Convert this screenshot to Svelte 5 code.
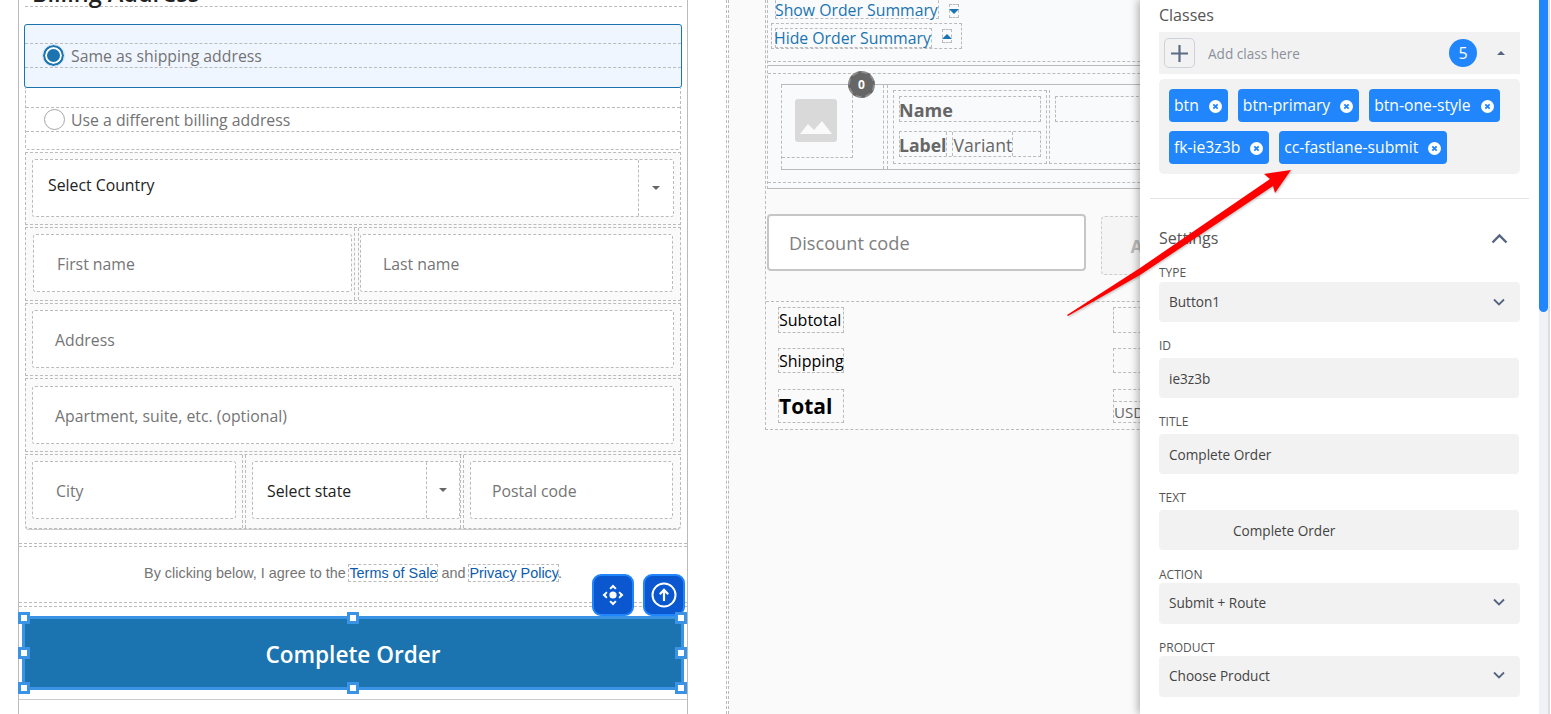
<script>
  const tags = ['btn', 'btn-primary', 'btn-one-style', 'fk-ie3z3b', 'cc-fastlane-submit'];
  const fields = [
    { label: 'TYPE', value: 'Button1', select: true, cls: 'f-type' },
    { label: 'ID', value: 'ie3z3b', cls: 'f-text' },
    { label: 'TITLE', value: 'Complete Order', cls: 'f-text' },
    { label: 'TEXT', value: 'Complete Order', cls: 'f-text f-indent' },
    { label: 'ACTION', value: 'Submit + Route', select: true, cls: 'f-tall' },
    { label: 'PRODUCT', value: 'Choose Product', select: true, cls: 'f-tall f-last' }
  ];
  const handles = ['tl', 'tc', 'tr', 'ml', 'mr', 'bl', 'bc', 'br'];
</script>

<div class="page">
  <section class="left">
    <div class="canvas">
      <h2 class="billing">Billing Address</h2>

      <div class="opt opt-on">
        <div class="opt-line">
          <span class="radio radio-on"></span>
          <span>Same as shipping address</span>
        </div>
      </div>
      <div class="opt opt-off">
        <div class="opt-line">
          <span class="radio"></span>
          <span>Use a different billing address</span>
        </div>
      </div>

      <div class="fieldset">
        <div class="fs-row r1">
          <div class="box select">
            <span class="val val-country">Select Country</span>
            <span class="drop"><i class="caret"></i></span>
          </div>
        </div>
        <div class="fs-row r2 cells">
          <div class="cell c-first"><div class="box ph ph-23">First name</div></div>
          <div class="cell c-last"><div class="box ph">Last name</div></div>
        </div>
        <div class="fs-row r3"><div class="box ph">Address</div></div>
        <div class="fs-row r4"><div class="box ph">Apartment, suite, etc. (optional)</div></div>
        <div class="fs-row r5 cells">
          <div class="cell c-city"><div class="box ph ph-23">City</div></div>
          <div class="cell c-state">
            <div class="box select">
              <span class="val val-state">Select state</span>
              <span class="drop drop-sm"><i class="caret"></i></span>
            </div>
          </div>
          <div class="cell c-zip"><div class="box ph ph-21">Postal code</div></div>
        </div>
      </div>

      <div class="terms-wrap">
        <p class="terms">By clicking below, I agree to the <a href="#terms">Terms of Sale</a> and <a href="#privacy">Privacy Policy</a>.</p>
        <div class="tools">
          <span class="tool">
            <svg width="26" height="26" viewBox="0 0 26 26" fill="#fff">
              <circle cx="13" cy="13" r="3.6" />
              <path d="M13 2.5l3.6 3.8-1.4 1.2-2.2-1.9-2.2 1.9-1.4-1.2z" />
              <path d="M13 23.5l3.6-3.8-1.4-1.2-2.2 1.9-2.2-1.9-1.4 1.2z" />
              <path d="M2.5 13l3.8-3.6 1.2 1.4-1.9 2.2 1.9 2.2-1.2 1.4z" />
              <path d="M23.5 13l-3.8-3.6-1.2 1.4 1.9 2.2-1.9 2.2 1.2 1.4z" />
            </svg>
          </span>
          <span class="tool">
            <svg width="28" height="28" viewBox="0 0 28 28" fill="none" stroke="#fff">
              <circle cx="14" cy="14" r="11.5" stroke-width="2" />
              <path d="M14 20v-11M9.8 13.2L14 8.8l4.2 4.4" stroke-width="2.2" />
            </svg>
          </span>
        </div>
      </div>

      <div class="cta-wrap">
        <button class="cta" type="button">
          Complete Order
          {#each handles as h}
            <i class="handle {h}"></i>
          {/each}
        </button>
      </div>
    </div>
  </section>

  <section class="mid">
    <div class="mid-inner">
      <div class="col">
        <div class="sec-top">
          <div class="toggle t-show">
            <span class="dash link">Show Order Summary</span>
            <span class="dash tri-box"><i class="tri down"></i></span>
          </div>
          <div class="toggle t-hide">
            <span class="dash link">Hide Order Summary</span>
            <span class="dash tri-box"><i class="tri up"></i></span>
          </div>
          <div class="rule-d"></div>
          <div class="rule-s"></div>
          <div class="item-wrap">
            <div class="item">
              <div class="thumb-col">
                <div class="thumb">
                  <svg width="42" height="43" viewBox="0 0 42 43">
                    <rect width="42" height="43" rx="3" fill="#d9d9d9" />
                    <path d="M5 35l8-10 6 6 8-9 10 13z" fill="#fafafa" />
                  </svg>
                </div>
                <span class="badge">0</span>
              </div>
              <div class="info">
                <div class="info-main">
                  <div class="dash name">Name</div>
                  <div class="dash label-row">
                    <span class="dash lab">Label</span>
                    <span class="dash var">Variant</span>
                  </div>
                </div>
                <div class="info-side"><div class="dash side-box"></div></div>
              </div>
            </div>
          </div>
        </div>

        <div class="discount">
          <div class="code">Discount code</div>
          <div class="apply">Apply</div>
        </div>

        <div class="totals">
          <div class="t-left">
            <div class="dash t t1">Subtotal</div>
            <div class="dash t t2">Shipping</div>
            <div class="dash t t3">Total</div>
          </div>
          <div class="t-right">
            <div class="dash r r1b"></div>
            <div class="dash r r2b"></div>
            <div class="dash r r3b"><span class="usd">USD</span></div>
          </div>
        </div>
      </div>
    </div>
  </section>

  <aside class="panel">
    <div class="panel-body">
      <div class="classes-title">Classes</div>
      <div class="add-row">
        <span class="plus">
          <svg width="21" height="21" viewBox="0 0 21 21" stroke="#5c6b85" stroke-width="2.2">
            <path d="M10.5 2v17M2 10.5h17" />
          </svg>
        </span>
        <span class="add-ph">Add class here</span>
        <span class="count">5</span>
        <i class="mini-caret"></i>
      </div>
      <div class="tags">
        {#each tags as tag}
          <span class="tag">
            <span class="tag-name">{tag}</span>
            <svg class="x" width="13" height="13" viewBox="0 0 13 13">
              <circle cx="6.5" cy="6.5" r="6.5" fill="#fff" />
              <path d="M4.3 4.3l4.4 4.4M8.7 4.3l-4.4 4.4" stroke="#2185fc" stroke-width="1.8" />
            </svg>
          </span>
        {/each}
      </div>
      <div class="divider"></div>
      <div class="settings">
        <span>Settings</span>
        <svg width="17" height="11" viewBox="0 0 17 11" fill="none" stroke="#56657f" stroke-width="2.4">
          <path d="M1.5 9.5l7-7 7 7" />
        </svg>
      </div>
      {#each fields as f}
        <div class="field {f.cls}">
          <div class="f-label">{f.label}</div>
          <div class="f-box">
            <span>{f.value}</span>
            {#if f.select}
              <svg width="12" height="8" viewBox="0 0 12 8" fill="none" stroke="#56657f" stroke-width="1.8">
                <path d="M1 1.5l5 5 5-5" />
              </svg>
            {/if}
          </div>
        </div>
      {/each}
    </div>
    <div class="scroll"><div class="thumb-bar"></div></div>
  </aside>

  <svg class="arrow" width="1551" height="714" viewBox="0 0 1551 714">
    <polygon points="1067,315 1140,268 1270,179 1264,174 1291,170 1275,193 1273,186 1170,255 1140,275 1068,316" fill="#ff0000" />
  </svg>
</div>

<style>
  :global(body) {
    margin: 0;
    background: #fff;
    font-family: "Open Sans", "Noto Sans", sans-serif;
  }

  .page {
    position: relative;
    display: flex;
    width: 1551px;
    height: 714px;
    overflow: hidden;
  }

  .dash {
    border: 1px dashed #bbb;
    box-sizing: border-box;
  }

  /* left column: checkout form */
  .left {
    width: 726px;
    flex: none;
    padding-left: 18px;
    box-sizing: border-box;
  }

  .canvas {
    display: flow-root;
    width: 670px;
    height: 714px;
    border-left: 1px solid #bbb;
    border-right: 1px solid #bbb;
    box-sizing: border-box;
  }

  .billing {
    height: 30px;
    margin: -24px 5px 0 6px;
    padding-left: 7px;
    border-bottom: 1px dashed #bbb;
    font-size: 23.5px;
    line-height: 34px;
    font-weight: 600;
    color: #222;
    box-sizing: content-box;
  }

  .opt {
    box-sizing: border-box;
    color: #737373;
    font-size: 15.8px;
  }

  .opt-on {
    height: 64px;
    margin: 17px 5px 0 5px;
    padding-top: 19px;
    background: #f0f6ff;
    border: 1px solid #1b74b0;
    border-radius: 3px;
  }

  .opt-off {
    height: 62px;
    margin: 0 6px;
    padding-top: 19px;
    border: 1px dashed #bbb;
    border-top: 0;
    border-radius: 0 0 3px 3px;
  }

  .opt-line {
    display: flex;
    align-items: center;
    gap: 6px;
    height: 23px;
    padding-left: 18px;
    border-top: 1px dashed #bbb;
    border-bottom: 1px dashed #bbb;
    box-sizing: content-box;
  }

  .opt-on .opt-line {
    margin-top: -1px;
    gap: 7px;
  }

  .radio {
    width: 21px;
    height: 21px;
    flex: none;
    border-radius: 50%;
    border: 1.5px solid #a6a6a6;
    background: #fff;
    box-sizing: border-box;
  }

  .radio-on {
    border: 2px solid #1b74b0;
    box-shadow: inset 0 0 0 2px #fff;
    background: #1b74b0;
    outline: 1px solid #cfe2f3;
  }

  .fieldset {
    margin: 2px 6px 0;
    background: #fafafa;
    border-radius: 0 0 4px 4px;
    box-sizing: border-box;
  }

  .fs-row {
    margin-top: 2px;
    padding: 6px 6px 7px;
    border: 1px dashed #bbb;
    box-sizing: border-box;
  }

  .r1 {
    margin-top: 0;
  }

  .r2 {
    height: 74px;
  }

  .r3 {
    height: 73px;
  }

  .r4 {
    height: 74px;
    padding-top: 7px;
  }

  .r5 {
    height: 75px;
    border-radius: 0 0 4px 4px;
    box-shadow: 0 1px 0 #ccc;
  }

  .cells {
    display: flex;
    padding: 0;
  }

  .cell {
    padding-top: 6px;
    box-sizing: border-box;
  }

  .c-first {
    width: 329px;
    padding-left: 7px;
    padding-right: 2px;
    border-right: 1px dashed #bbb;
  }

  .c-last {
    flex: 1;
    margin-left: 3px;
    padding-left: 1px;
    padding-right: 7px;
    border-left: 1px dashed #bbb;
  }

  .c-city {
    width: 217px;
    padding-left: 6px;
    padding-right: 6px;
    border-right: 1px dashed #bbb;
  }

  .c-state {
    width: 216px;
    margin-left: 2px;
    padding-left: 6px;
    border-left: 1px dashed #bbb;
    border-right: 1px dashed #bbb;
  }

  .c-zip {
    flex: 1;
    margin-left: 2px;
    padding-left: 6px;
    padding-right: 7px;
    border-left: 1px dashed #bbb;
  }

  .box {
    height: 58px;
    display: flex;
    align-items: center;
    background: #fff;
    border: 1px dashed #bbb;
    border-radius: 3px;
    box-sizing: border-box;
    font-size: 15.8px;
  }

  .ph {
    padding: 2px 0 0 22px;
    color: #757575;
  }

  .ph-23 {
    padding-left: 23px;
  }

  .ph-21 {
    padding-left: 21px;
  }

  .select {
    justify-content: space-between;
    color: #222;
  }

  .val {
    padding-left: 15px;
  }

  .val-country {
    padding-bottom: 6px;
  }

  .val-state {
    padding: 2px 0 0 14px;
  }

  .drop {
    align-self: stretch;
    width: 34px;
    display: flex;
    align-items: center;
    justify-content: center;
    border-left: 1px dashed #bbb;
  }

  .drop-sm {
    width: 32px;
  }

  .caret {
    width: 0;
    height: 0;
    border: 4px solid transparent;
    border-top: 4px solid #666;
    border-bottom: 0;
  }

  .terms-wrap {
    position: relative;
    height: 60px;
    margin-top: 14px;
    padding-top: 2px;
    border-top: 1px dashed #bbb;
    border-bottom: 1px dashed #bbb;
    box-sizing: border-box;
  }

  .terms {
    margin: 0;
    padding-top: 17px;
    border-top: 1px dashed #bbb;
    text-align: center;
    font: 14.4px/18px "Liberation Sans", Arial, sans-serif;
    color: #757575;
  }

  .terms a {
    color: #0b5cad;
    text-decoration: none;
    outline: 1px dashed #bbb;
  }

  .tools {
    position: absolute;
    top: 30px;
    right: 2px;
    display: flex;
    gap: 9px;
  }

  .tool {
    width: 42px;
    height: 42px;
    display: flex;
    align-items: center;
    justify-content: center;
    background: #0b57d0;
    border: 2px solid #2185fc;
    border-radius: 9px;
    box-sizing: border-box;
  }

  .cta-wrap {
    height: 94px;
    margin-top: 3px;
    padding-top: 9px;
    border-top: 1px dashed #bbb;
    border-bottom: 1px solid #ccc;
    box-sizing: border-box;
  }

  .cta {
    position: relative;
    display: block;
    width: 662px;
    height: 74px;
    margin: 0 0 0 3px;
    padding-top: 3px;
    background: #1b74b0;
    border: 3px solid #3a93e4;
    color: #fff;
    font: 600 22.6px "Open Sans", sans-serif;
  }

  .handle {
    position: absolute;
    width: 12px;
    height: 12px;
    background: #fff;
    border: 3px solid #3a93e4;
    box-sizing: border-box;
  }

  .tl { left: -7px; top: -7px; }
  .tc { left: 322px; top: -7px; }
  .tr { right: -6px; top: -7px; }
  .ml { left: -7px; top: 28px; }
  .mr { right: -6px; top: 28px; }
  .bl { left: -7px; bottom: -7px; }
  .bc { left: 322px; bottom: -7px; }
  .br { right: -6px; bottom: -7px; }

  /* middle column: order summary */
  .mid {
    flex: 1;
    min-width: 0;
    overflow: hidden;
    border-left: 1px dashed #bbb;
  }

  .mid-inner {
    height: 100%;
    margin-left: 1px;
    padding-left: 36px;
    background: #fafafa;
    border-left: 1px dashed #bbb;
  }

  .col {
    width: 480px;
    height: 430px;
    border-left: 1px dashed #bbb;
    border-bottom: 1px dashed #bbb;
    box-sizing: border-box;
  }

  .sec-top {
    display: flow-root;
    height: 189px;
    margin-left: 1px;
    border-left: 1px dashed #bbb;
    border-bottom: 1px solid #bbb;
    box-sizing: border-box;
    background: #f9fafc;
  }

  .toggle {
    display: flex;
    align-items: center;
    color: #1b74b0;
    font-size: 15.8px;
  }

  .link {
    line-height: 18px;
    text-indent: -1px;
    white-space: nowrap;
  }

  .t-show {
    margin: -5px 0 0 7px;
    gap: 10px;
    height: 24px;
  }

  .t-show .link {
    height: 24px;
    padding-top: 5px;
  }

  .t-show .tri-box {
    margin-top: 8px;
  }

  .t-hide {
    width: 191px;
    height: 26px;
    margin: 4px 0 0 3px;
    padding: 3px 0 0 3px;
    gap: 10px;
    border: 1px dashed #bbb;
    box-sizing: border-box;
  }

  .t-hide .link {
    text-indent: -2px;
  }

  .t-hide .tri-box {
    margin-top: -3px;
  }

  .tri-box {
    width: 10px;
    height: 14px;
    display: flex;
    align-items: center;
    justify-content: center;
  }

  .tri {
    width: 0;
    height: 0;
    border: 5px solid transparent;
  }

  .tri.down {
    border-top: 5px solid #1b74b0;
    border-bottom: 0;
  }

  .tri.up {
    border-bottom: 5px solid #1b74b0;
    border-top: 0;
  }

  .rule-d {
    height: 13px;
    border-bottom: 1px dashed #bbb;
    box-sizing: border-box;
  }

  .rule-s {
    height: 3px;
    border-bottom: 1px solid #bbb;
    box-sizing: content-box;
  }

  .item-wrap {
    height: 110px;
    margin-top: 7px;
    padding: 10px 0 0 13px;
    border-top: 1px dashed #bbb;
    border-bottom: 1px dashed #bbb;
    box-sizing: border-box;
  }

  .item {
    display: flex;
    height: 86px;
    border-top: 1px solid #bbb;
    border-bottom: 1px solid #bbb;
    box-sizing: border-box;
  }

  .thumb-col {
    position: relative;
    width: 103px;
    flex: none;
    border: 1px dashed #bbb;
    border-top: 0;
    border-bottom: 0;
    box-sizing: border-box;
  }

  .thumb {
    width: 71px;
    height: 73px;
    padding: 0 2px 2px 0;
    display: flex;
    align-items: center;
    justify-content: center;
    border: 1px dashed #bbb;
    border-top: 0;
    border-left: 0;
    box-sizing: border-box;
  }

  .badge {
    position: absolute;
    top: -14px;
    left: 66px;
    width: 27px;
    height: 27px;
    display: flex;
    align-items: center;
    justify-content: center;
    border-radius: 50%;
    background: #666;
    border: 2px dashed #8c8c8c;
    box-sizing: border-box;
    color: #fff;
    font-size: 12px;
    font-weight: 700;
  }

  .info {
    display: flex;
    flex: 1;
    margin-left: 3px;
    padding-left: 5px;
    border-left: 1px dashed #bbb;
  }

  .info-main {
    width: 154px;
    height: 74px;
    margin-top: 5px;
    padding: 5px;
    border: 1px dashed #bbb;
    box-sizing: border-box;
    color: #666;
    font-size: 17.6px;
  }

  .name {
    height: 26px;
    font-size: 18px;
    font-weight: 700;
    line-height: 27px;
    text-indent: -1px;
  }

  .label-row {
    display: flex;
    height: 26px;
    margin-top: 9px;
    gap: 5px;
    line-height: 26px;
  }

  .label-row .lab {
    font-weight: 700;
    text-indent: -1px;
    border-top: 0;
    border-bottom: 0;
    border-left: 0;
  }

  .label-row .var {
    border-top: 0;
    border-bottom: 0;
  }

  .info-side {
    flex: 1;
    height: 74px;
    margin-top: 5px;
    margin-left: 2px;
    padding: 6px 0 0 5px;
    border-left: 1px dashed #bbb;
    border-bottom: 1px dashed #bbb;
    box-sizing: border-box;
  }

  .side-box {
    height: 26px;
  }

  .discount {
    display: flex;
    align-items: flex-start;
    height: 112px;
    padding-top: 25px;
    padding-left: 1px;
    gap: 15px;
    box-sizing: border-box;
  }

  .code {
    width: 319px;
    height: 57px;
    display: flex;
    align-items: center;
    padding-left: 20px;
    background: #fff;
    border: 2px solid #c6c6c6;
    border-radius: 4px;
    box-sizing: border-box;
    color: #808080;
    font-size: 18.2px;
  }

  .apply {
    width: 110px;
    height: 59px;
    margin-top: 2px;
    display: flex;
    align-items: center;
    justify-content: center;
    background: #f5f5f5;
    border: 1px dashed #ccc;
    border-radius: 4px;
    box-sizing: border-box;
    color: #bbb;
    font-size: 18px;
    font-weight: 700;
  }

  .totals {
    display: flex;
    height: 128px;
    padding: 5px 0 0 12px;
    border-top: 1px dashed #bbb;
    box-sizing: border-box;
  }

  .t-left {
    width: 66px;
    flex: none;
  }

  .t-right {
    width: 120px;
    margin-left: 269px;
    flex: none;
  }

  .t {
    color: #000;
    font-size: 16px;
    white-space: nowrap;
  }

  .t1 {
    height: 26px;
    line-height: 24px;
  }

  .t2 {
    height: 25px;
    margin-top: 15px;
    margin-bottom: 16px;
    line-height: 24px;
  }

  .t3 {
    height: 34px;
    font-size: 21px;
    font-weight: 700;
    line-height: 33px;
  }

  .r {
    border-right: 0;
  }

  .r1b {
    height: 26px;
  }

  .r2b {
    height: 25px;
    margin: 15px 0 16px;
  }

  .r3b {
    height: 34px;
    padding-top: 11px;
    color: #666;
    font-size: 15px;
    line-height: 21px;
  }

  .usd {
    display: block;
    border-top: 1px dashed #bbb;
  }

  /* right panel */
  .panel {
    position: relative;
    width: 411px;
    flex: none;
    display: flex;
    background: #fff;
    box-shadow: -2px 0 8px rgba(0, 0, 0, 0.3);
  }

  .panel-body {
    width: 399px;
    padding: 0 10px 0 19px;
    box-sizing: border-box;
    flex: none;
  }

  .classes-title {
    height: 32px;
    padding-top: 4px;
    box-sizing: border-box;
    color: #555;
    font-size: 16px;
    line-height: 22px;
  }

  .add-row {
    display: flex;
    align-items: center;
    height: 42px;
    width: 361px;
    padding-left: 5px;
    background: #f2f2f2;
    box-sizing: border-box;
  }

  .plus {
    width: 31px;
    height: 30px;
    display: flex;
    align-items: center;
    justify-content: center;
    border: 1px solid #cdd1d9;
    border-radius: 5px;
    box-sizing: border-box;
  }

  .add-ph {
    margin-left: 13px;
    color: #8b909c;
    font-size: 13.6px;
  }

  .count {
    width: 28px;
    height: 28px;
    margin-left: auto;
    display: flex;
    align-items: center;
    justify-content: center;
    border-radius: 50%;
    background: #2185fc;
    color: #fff;
    font-size: 16px;
  }

  .mini-caret {
    width: 0;
    height: 0;
    margin: 0 15px 0 20px;
    border: 4px solid transparent;
    border-bottom: 4px solid #56657f;
    border-top: 0;
  }

  .tags {
    display: flex;
    flex-wrap: wrap;
    align-content: flex-start;
    gap: 9px 10px;
    width: 361px;
    height: 95px;
    margin-top: 5px;
    padding: 10px;
    background: #f2f2f2;
    border-radius: 5px;
    box-sizing: border-box;
  }

  .tag {
    height: 33px;
    display: flex;
    align-items: center;
    gap: 10px;
    padding: 0 6px 0 5px;
    background: #2185fc;
    border-radius: 4px;
    color: #fff;
    font-size: 15.7px;
    box-sizing: border-box;
  }

  .tag-name {
    margin-top: -2px;
  }

  .x {
    margin-top: 1px;
  }

  .divider {
    height: 1px;
    width: 379px;
    margin: 24px 0 0 -9px;
    background: #e3e3e3;
  }

  .settings {
    display: flex;
    justify-content: space-between;
    align-items: center;
    width: 349px;
    height: 22px;
    margin-top: 28px;
    color: #555;
    font-size: 16px;
  }

  .field {
    width: 361px;
  }

  .f-label {
    height: 22px;
    padding-top: 2px;
    box-sizing: border-box;
    color: #555;
    font-size: 12px;
    line-height: 16px;
  }

  .f-box {
    height: 40px;
    display: flex;
    align-items: center;
    justify-content: space-between;
    padding: 0 15px 0 10px;
    background: #f2f2f2;
    border-radius: 4px;
    box-sizing: border-box;
    color: #444;
    font-size: 13.6px;
  }

  .f-type {
    padding-top: 11px;
  }

  .f-type .f-label {
    padding-top: 5px;
  }

  .f-type .f-box {
    padding-bottom: 1px;
  }

  .f-text {
    margin-top: 14px;
    width: 360px;
  }

  .f-indent .f-box {
    padding-left: 74px;
  }

  .f-tall {
    margin-top: 14px;
  }

  .f-tall .f-label {
    height: 19px;
    padding-top: 3px;
  }

  .f-tall .f-box {
    height: 41px;
    padding-bottom: 3px;
  }

  .f-last {
    margin-top: 13px;
  }

  .scroll {
    width: 9px;
    height: 100%;
    flex: none;
    background: #f0f2f7;
    border-right: 2px solid #ddd;
    box-sizing: content-box;
  }

  .thumb-bar {
    width: 9px;
    height: 312px;
    background: #2185fc;
    border-radius: 0 0 5px 5px;
  }

  .arrow {
    position: absolute;
    top: 0;
    left: 0;
    pointer-events: none;
    filter: drop-shadow(1px 1px 1px rgba(0, 0, 0, 0.25));
  }
</style>
